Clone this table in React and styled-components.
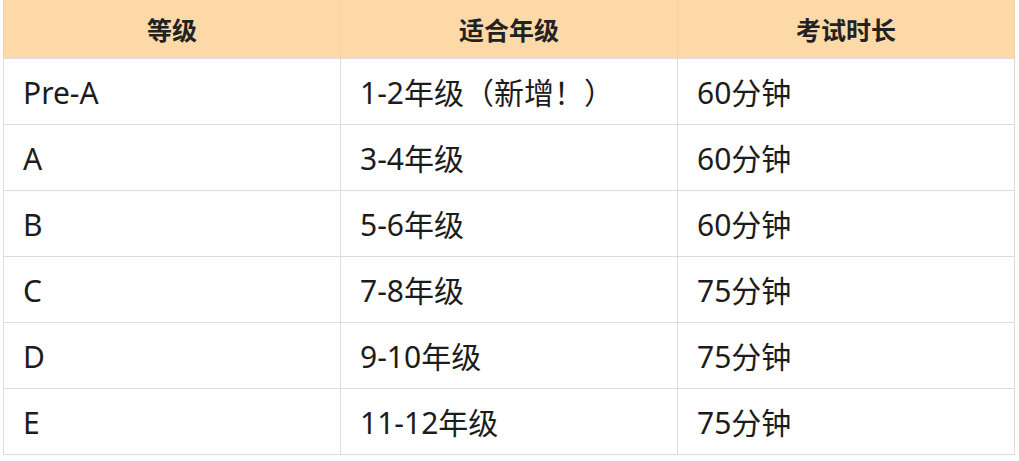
import React from 'react';
import styled, { createGlobalStyle } from 'styled-components';

const GlobalStyle = createGlobalStyle`
  body {
    margin: 0;
    background: #fff;
    font-family: "Noto Sans", "Noto Sans CJK SC", sans-serif;
  }
`;

const Wrap = styled.div`
  padding: 0 4px 0 3px;
`;

const Table = styled.table`
  width: 100%;
  border-collapse: collapse;
  table-layout: fixed;
  color: #1c1c1c;
`;

const Head = styled.th`
  height: 58px;
  padding: 0;
  background: #fdd9a7;
  border-left: 1px solid #f3d3a4;
  border-right: 1px solid #f3d3a4;
  font-size: 25px;
  font-weight: 700;
  text-align: center;
  color: #222;
`;

const Cell = styled.td`
  height: 63px;
  padding: 2px 0 0 19px;
  border: 1px solid #dcdcdc;
  font-size: 30px;
  line-height: 1;
  text-align: left;
  vertical-align: middle;
`;

const rows = [
  ['Pre-A', '1-2年级（新增！）', '60分钟'],
  ['A', '3-4年级', '60分钟'],
  ['B', '5-6年级', '60分钟'],
  ['C', '7-8年级', '75分钟'],
  ['D', '9-10年级', '75分钟'],
  ['E', '11-12年级', '75分钟'],
];

function App() {
  return (
    <Wrap>
      <GlobalStyle />
      <Table>
        <thead>
          <tr>
            <Head>等级</Head>
            <Head>适合年级</Head>
            <Head>考试时长</Head>
          </tr>
        </thead>
        <tbody>
          {rows.map(r => (
            <tr key={r[0]}>
              {r.map((c, i) => <Cell key={i}>{c}</Cell>)}
            </tr>
          ))}
        </tbody>
      </Table>
    </Wrap>
  );
}

export default App;
